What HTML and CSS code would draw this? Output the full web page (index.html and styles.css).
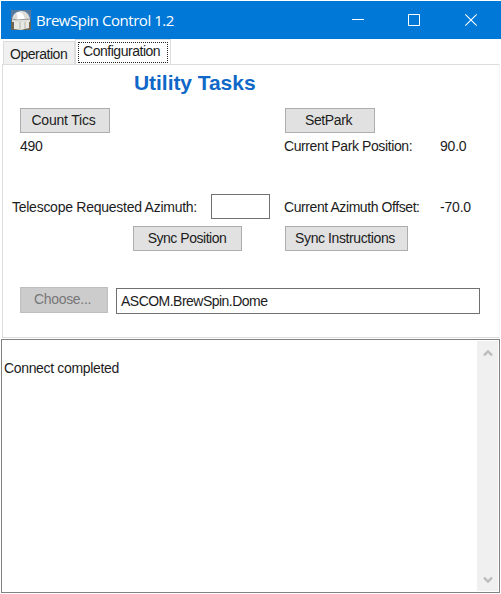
FILE: index.html
```html
<!DOCTYPE html>
<html lang="en">
<head>
<meta charset="utf-8">
<title>BrewSpin Control 1.2</title>
<link rel="stylesheet" href="styles.css">
</head>
<body>
<div class="window">
  <header class="titlebar">
    <svg class="app-icon" width="20" height="20" viewBox="0 0 20 20">
      <rect width="20" height="20" fill="#55799f"/>
      <path d="M0 20V10L4 7h13l3 3v10z" fill="#6d6657"/>
      <path d="M1 9C2 3 7 1 11 1s7 3 8 8v3H1z" fill="#dddcd8"/>
      <path d="M5 3c4-2 8 0 9 7l-9 1c2-3 2-5 0-8z" fill="#fff"/>
      <path d="M1 9l5 1 13-1" fill="none" stroke="#999b99"/>
      <path d="M3 11l6 1 9-1v7l-8 2-7-1z" fill="#e8e7e2"/>
      <path d="M9 12v7M14 12v7" stroke="#b3b2ac"/>
    </svg>
    <h1 class="caption">BrewSpin Control 1.2</h1>
    <div class="controls">
      <svg width="126" height="14" viewBox="0 0 126 14" fill="none" stroke="#fff">
        <path d="M0 6.5h12"/>
        <path d="M56.5 1.5h11v11h-11z"/>
        <path d="M113.3 1.3l11.4 11.4M124.7 1.3l-11.4 11.4" stroke-width="1.1"/>
      </svg>
    </div>
  </header>
  <nav class="tabs">
    <div class="tab"><span class="t-operation">Operation</span></div>
    <div class="tab active"><div class="focus"><span class="t-configuration">Configuration</span></div></div>
  </nav>
  <main class="panel">
    <h2 class="heading"><span>Utility Tasks</span></h2>
    <div class="row buttons-top">
      <button class="btn count"><span class="t-count">Count Tics</span></button>
      <button class="btn park"><span class="t-park">SetPark</span></button>
    </div>
    <div class="row labels">
      <span class="col-left"><span class="t-num">490</span></span>
      <span class="col-mid"><span class="t-position">Current Park Position:</span></span>
      <span class="t-ninety">90.0</span>
    </div>
    <div class="row azimuth">
      <span class="col-azimuth"><span class="t-telescope">Telescope Requested Azimuth:</span></span>
      <input class="field small" type="text">
      <span class="col-mid"><span class="t-offset">Current Azimuth Offset:</span></span>
      <span class="t-seventy">-70.0</span>
    </div>
    <div class="row buttons-sync">
      <button class="btn sync"><span class="t-sync">Sync Position</span></button>
      <button class="btn instructions"><span class="t-instructions">Sync Instructions</span></button>
    </div>
    <div class="row driver">
      <button class="btn choose" disabled><span class="t-choose">Choose...</span></button>
      <div class="field wide"><span class="t-ascom">ASCOM.BrewSpin.Dome</span></div>
    </div>
  </main>
  <section class="log">
    <div class="log-text"><span class="t-connect">Connect completed</span></div>
    <div class="scrollbar">
      <svg width="10" height="8" viewBox="0 0 10 8"><path d="M1 6.4l4-4 4 4" fill="none" stroke="#bcbcbc" stroke-width="2.4"/></svg>
      <svg width="10" height="8" viewBox="0 0 10 8"><path d="M1 1.6l4 4 4-4" fill="none" stroke="#bcbcbc" stroke-width="2.4"/></svg>
    </div>
  </section>
</div>
</body>
</html>
```
FILE: styles.css
```css
* { box-sizing: border-box; }
body {
  margin: 0;
  background: #fff;
  font: 14px/16px "Liberation Sans", Arial, sans-serif;
  color: #1c1c1c;
  overflow: hidden;
}
.window { width: 501px; height: 594px; padding: 1px 1px 0 1px; display: flex; flex-direction: column; }
.titlebar { height: 38px; margin-right: -1px; background: #0078d7; display: flex; align-items: center; padding-left: 10px; flex: none; }
.app-icon { display: block; }
.caption { margin: -1px 0 0 5px; font: 400 15px/20px "Open Sans", sans-serif; color: #fff; letter-spacing: -0.46px; width: 200px; white-space: nowrap; }
.controls { margin-left: 116px; height: 14px; margin-top: -1px; }
.controls svg { display: block; }
.tabs { height: 25px; display: flex; align-items: flex-end; padding-left: 2px; flex: none; white-space: nowrap; }
.tab { width: 72px; height: 23px; border: 1px solid #dcdcdc; border-bottom: 0; background: #f0f0f0; padding: 4px 0 0 6px; }
.tab.active { width: 96px; height: 25px; background: #fff; padding: 2px 0 0 2px; }
.focus { width: 90px; height: 21px; border: 1px dotted #222; padding: 0 0 0 4px; }
.panel { height: 274px; margin-left: 1px; border: 1px solid #dcdcdc; border-right-color: #f7f7f7; padding-left: 10px; flex: none; white-space: nowrap; }
.heading { margin: 5px 0 0 121px; height: 26px; font: 700 21px/26px "Liberation Sans", Arial, sans-serif; color: #0f68c8; letter-spacing: -0.05px; }
.row { display: flex; }
.btn { font: inherit; color: inherit; background: #e1e1e1; border: 1px solid #adadad; border-radius: 0; height: 25px; padding: 0 3px 2px 0; }
.btn:disabled { color: #777; background: #ccc; border-color: #bfbfbf; }
.buttons-top { margin: 12px 0 0 7px; }
.count { width: 90px; }
.park { width: 90px; margin-left: 175px; }
.labels { margin: 5px 0 0 7px; height: 16px; }
.col-left { width: 264px; }
.col-mid { width: 156px; }
.azimuth { margin-top: 40px; height: 25px; align-items: center; }
.col-azimuth { width: 199px; margin-left: -1px; }
.field { border: 1px solid #707070; background: #fff; font: inherit; border-radius: 0; }
.small { width: 59px; height: 25px; margin-right: 14px; padding: 0 4px; }
.buttons-sync { margin: 7px 0 0 120px; }
.sync { width: 109px; padding-right: 1px; }
.instructions { width: 123px; margin-left: 43px; }
.driver { margin: 36px 0 0 7px; }
.choose { width: 88px; height: 26px; }
.wide { width: 364px; height: 26px; margin: 1px 0 0 8px; padding: 4px 4px; }
.log { margin: 1px 0 0; width: 499px; height: 254px; border: 1px solid #828282; display: flex; flex: none; }
.log-text { flex: 1; padding: 20px 0 0 2px; }
.scrollbar { width: 21px; margin: 1px; background: #f0f0f0; display: flex; flex-direction: column; align-items: center; justify-content: space-between; padding: 8px 0 7px; }
.scrollbar svg { display: block; }

/* Per-label tracking for the compact dialog type */
.t-operation, .t-configuration, .t-sync { letter-spacing: -0.47px; }
.t-count { letter-spacing: -0.2px; }
.t-park, .t-position, .t-instructions { letter-spacing: -0.4px; }
.t-num { letter-spacing: -0.3px; }
.t-telescope { letter-spacing: -0.26px; }
.t-offset { letter-spacing: -0.42px; }
.t-ninety, .t-seventy { letter-spacing: -0.2px; }
.t-choose { letter-spacing: -0.3px; }
.t-ascom { letter-spacing: -0.52px; }
.t-connect { letter-spacing: -0.34px; }
```
